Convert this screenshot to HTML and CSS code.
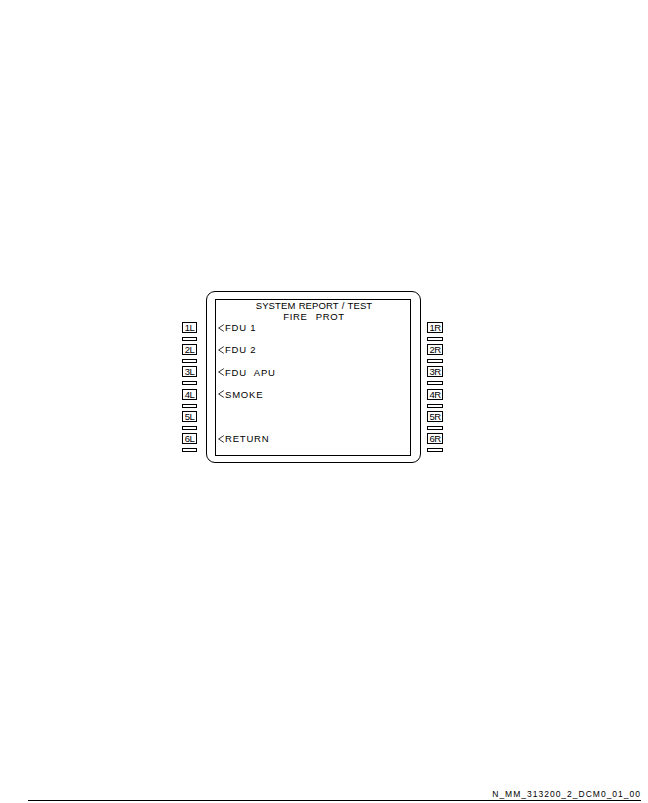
FILE: index.html
```html
<!DOCTYPE html>
<html lang="en">
<head>
  <meta charset="UTF-8">
  <meta name="viewport" content="width=device-width, initial-scale=1.0">
  <title>SYSTEM REPORT / TEST - FIRE PROT</title>
  <link rel="stylesheet" href="styles.css">
</head>
<body>
  <div class="sheet">
    <!-- MCDU figure -->
    <div class="cdu">
      <div class="keys keys-left">
        <div class="key"><span class="key-label">1L</span><span class="key-bar"></span></div>
        <div class="key"><span class="key-label">2L</span><span class="key-bar"></span></div>
        <div class="key"><span class="key-label">3L</span><span class="key-bar"></span></div>
        <div class="key"><span class="key-label">4L</span><span class="key-bar"></span></div>
        <div class="key"><span class="key-label">5L</span><span class="key-bar"></span></div>
        <div class="key"><span class="key-label">6L</span><span class="key-bar"></span></div>
      </div>

      <div class="frame">
        <div class="screen">
          <div class="line title">SYSTEM REPORT / TEST</div>
          <div class="line title title-sub">FIRE&nbsp;&nbsp;PROT</div>
          <div class="line"><svg class="arrow" viewBox="0 0 6 8"><polyline points="5.8,0.6 0.6,4 5.8,7.4"/></svg>FDU 1</div>
          <div class="line"></div>
          <div class="line"><svg class="arrow" viewBox="0 0 6 8"><polyline points="5.8,0.6 0.6,4 5.8,7.4"/></svg>FDU 2</div>
          <div class="line"></div>
          <div class="line"><svg class="arrow" viewBox="0 0 6 8"><polyline points="5.8,0.6 0.6,4 5.8,7.4"/></svg>FDU&nbsp;&nbsp;APU</div>
          <div class="line"></div>
          <div class="line"><svg class="arrow" viewBox="0 0 6 8"><polyline points="5.8,0.6 0.6,4 5.8,7.4"/></svg>SMOKE</div>
          <div class="line"></div>
          <div class="line"></div>
          <div class="line"></div>
          <div class="line"><svg class="arrow" viewBox="0 0 6 8"><polyline points="5.8,0.6 0.6,4 5.8,7.4"/></svg>RETURN</div>
        </div>
      </div>

      <div class="keys keys-right">
        <div class="key"><span class="key-label">1R</span><span class="key-bar"></span></div>
        <div class="key"><span class="key-label">2R</span><span class="key-bar"></span></div>
        <div class="key"><span class="key-label">3R</span><span class="key-bar"></span></div>
        <div class="key"><span class="key-label">4R</span><span class="key-bar"></span></div>
        <div class="key"><span class="key-label">5R</span><span class="key-bar"></span></div>
        <div class="key"><span class="key-label">6R</span><span class="key-bar"></span></div>
      </div>
    </div>

    <!-- figure reference -->
    <div class="ref">N_MM_313200_2_DCM0_01_00</div>
  </div>
</body>
</html>
```

FILE: styles.css
```css
body {
  margin: 0;
  background: #fff;
  color: #000;
  font-family: "Liberation Sans", Arial, sans-serif;
}
.sheet {
  width: 648px;
  height: 803px;
  display: flex;
  flex-direction: column;
  box-sizing: border-box;
  padding-top: 291px;
}
/* MCDU: keys / frame / keys */
.cdu {
  display: flex;
  align-items: flex-start;
  margin-left: 182px;
}
.keys {
  display: flex;
  flex-direction: column;
  padding-top: 31px;
  width: 15px;
}
.keys-left {
  margin-right: 9px;
}
.keys-right {
  margin-left: 6px;
  width: 16px;
}
.key {
  display: flex;
  flex-direction: column;
  height: 22.2px;
}
.key-label {
  display: block;
  height: 9px;
  border: 1px solid #000;
  font-size: 9.5px;
  line-height: 9px;
  text-align: center;
  letter-spacing: -0.5px;
}
.key-bar {
  display: block;
  height: 2px;
  margin-top: 4px;
  border: 1px solid #000;
}
/* outer bezel */
.frame {
  width: 215px;
  height: 172px;
  box-sizing: border-box;
  border: 1px solid #000;
  border-radius: 9px;
  padding: 7px 9px 7px 8px;
}
/* display area */
.screen {
  height: 157px;
  box-sizing: border-box;
  border: 1px solid #000;
  padding: 0 0 0 2px;
  font-size: 9.5px;
}
.line {
  display: flex;
  align-items: center;
  height: 11.1px;
  line-height: 11.1px;
  white-space: nowrap;
  letter-spacing: 0.8px;
}
.title {
  justify-content: center;
  letter-spacing: 0.1px;
  font-size: 9.5px;
  word-spacing: 0.5px;
}
.title-sub {
  letter-spacing: 0.6px;
  word-spacing: 1px;
}
.arrow {
  width: 6px;
  height: 8px;
  margin-right: 1px;
  fill: none;
  stroke: #000;
  stroke-width: 0.8;
}
/* drawing number with rule */
.ref {
  margin-top: auto;
  margin-left: 28px;
  margin-right: 7px;
  margin-bottom: 2px;
  border-bottom: 1px solid #000;
  text-align: right;
  font-size: 8.5px;
  line-height: 10px;
  letter-spacing: 1px;
  padding-bottom: 1px;
}
```
